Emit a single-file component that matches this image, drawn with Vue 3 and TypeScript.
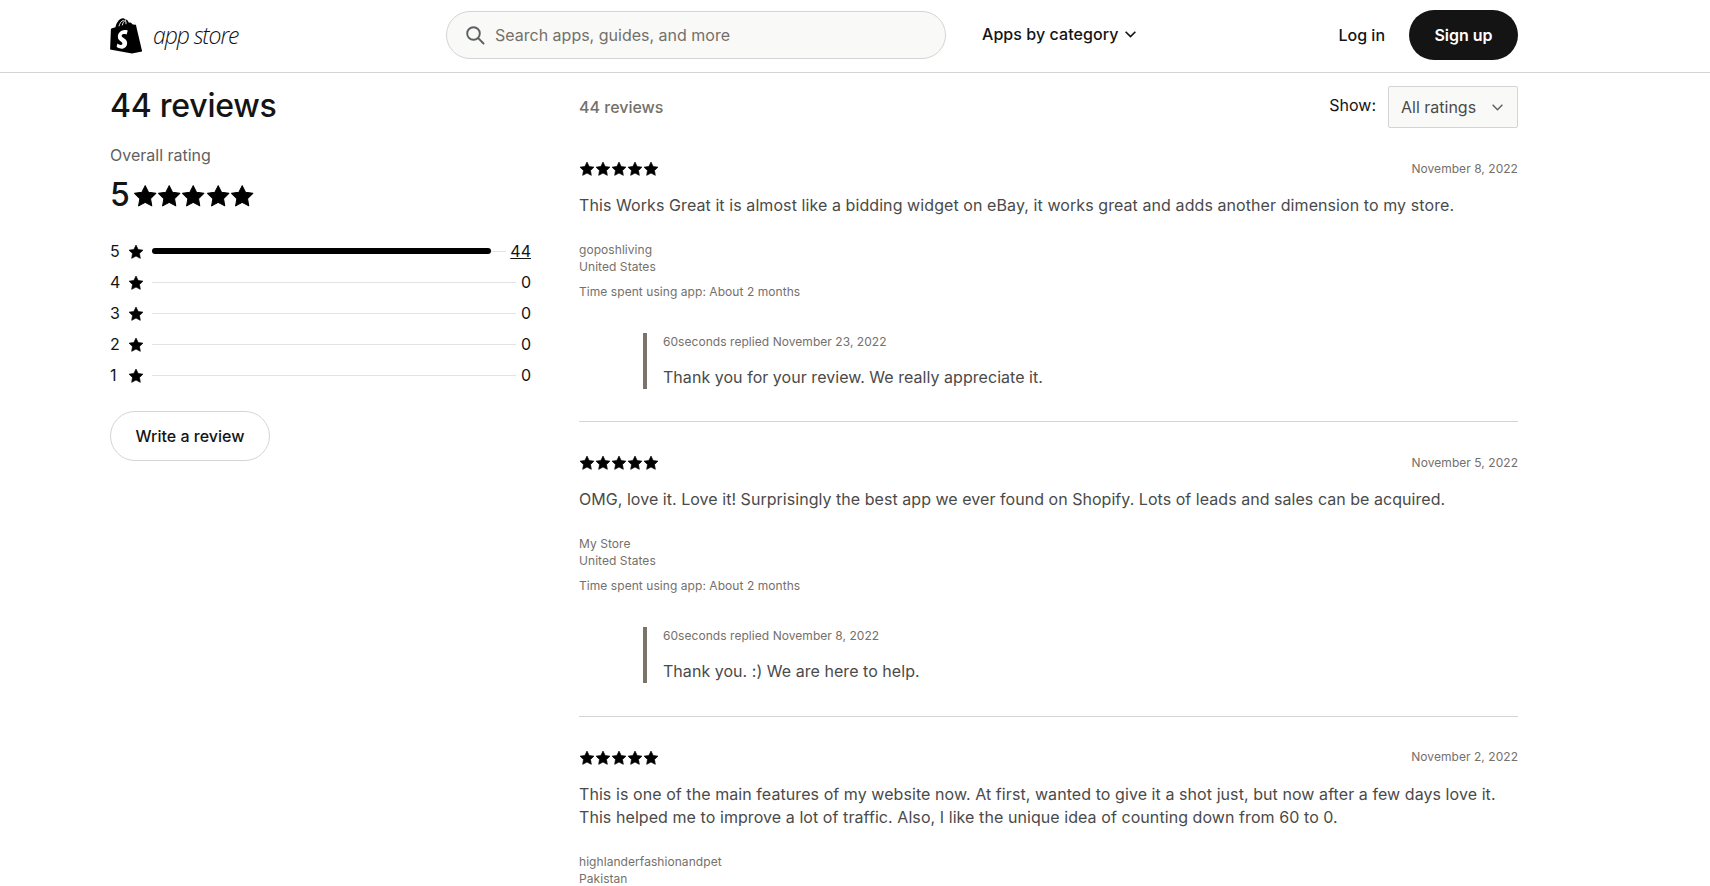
<script setup lang="ts">
interface Review {
  date: string
  text: string
  tracking: number
  author: string
  country: string
  time?: string
  replyDate?: string
  reply?: string
}

const reviews: Review[] = [
  {
    date: 'November 8, 2022',
    text: 'This Works Great it is almost like a bidding widget on eBay, it works great and adds another dimension to my store.',
    tracking: 0.08,
    author: 'goposhliving',
    country: 'United States',
    time: 'About 2 months',
    replyDate: 'November 23, 2022',
    reply: 'Thank you for your review. We really appreciate it.',
  },
  {
    date: 'November 5, 2022',
    text: 'OMG, love it. Love it! Surprisingly the best app we ever found on Shopify. Lots of leads and sales can be acquired.',
    tracking: 0.04,
    author: 'My Store',
    country: 'United States',
    time: 'About 2 months',
    replyDate: 'November 8, 2022',
    reply: 'Thank you. :) We are here to help.',
  },
  {
    date: 'November 2, 2022',
    text: 'This is one of the main features of my website now. At first, wanted to give it a shot just, but now after a few days love it. This helped me to improve a lot of traffic. Also, I like the unique idea of counting down from 60 to 0.',
    tracking: 0.07,
    author: 'highlanderfashionandpet',
    country: 'Pakistan',
  },
]

const ratings = [
  { stars: 5, count: 44 },
  { stars: 4, count: 0 },
  { stars: 3, count: 0 },
  { stars: 2, count: 0 },
  { stars: 1, count: 0 },
]

const starPath = 'M12 1.6L15.23 8.15 22.46 9.2 17.23 14.3 18.47 21.5 12 18.1 5.53 21.5 6.77 14.3 1.54 9.2 8.77 8.15z'
</script>

<template>
  <div class="page">
    <header class="topbar">
      <div class="topbar-inner">
        <a class="logo">
          <svg class="bag" viewBox="0 0 32 36" aria-hidden="true">
            <path fill="#000" d="M25.6 7.1c0-.2-.2-.3-.3-.3l-2.9-.2-2.1-2.1c-.2-.2-.6-.1-.8-.1l-1 .3C17.9 3.3 17 1.4 14.9 1.4h-.2C14.1.6 13.4.3 12.8.3 8 .3 5.7 6.3 5 9.3l-3.3 1c-1 .3-1 .4-1.2 1.3L-.3 31.5 21.5 35.6l10.3-2.2S25.6 7.3 25.6 7.1z" transform="translate(.4 0)"/>
            <path fill="#fff" d="M17.7 12.7l-1.1 3.9s-1.2-.6-2.7-.5c-2.1.1-2.2 1.4-2.2 1.8.1 1.9 5.1 2.3 5.4 6.7.2 3.5-1.9 5.9-4.9 6.1-3.6.2-5.6-1.900-5.6-1.900l.8-3.200s2 1.500 3.600 1.400c1 0 1.400-.9 1.400-1.500-.2-2.500-4.300-2.300-4.500-6.300-.2-3.400 2-6.800 6.900-7.100 1.800-.2 2.900.6 2.900.6z"/>
            <path fill="none" stroke="#fff" stroke-width=".9" d="M9 8.300c.6-2.600 2.300-5.800 4.800-6M12.300 7.400c.4-2 1.400-4.200 3-5M16 6.200c.1-1.500-.1-3-.7-4"/>
          </svg>
          <span class="logo-text">app store</span>
        </a>

        <label class="search">
          <svg class="search-icon" viewBox="0 0 20 20" aria-hidden="true">
            <circle cx="8.500" cy="8.500" r="6.300" fill="none" stroke="#5c5f62" stroke-width="1.900"/>
            <path d="M13.200 13.200l5.300 5.300" stroke="#5c5f62" stroke-width="1.900" stroke-linecap="round"/>
          </svg>
          <span class="search-placeholder">Search apps, guides, and more</span>
        </label>

        <a class="category">
          Apps by category
          <svg class="chev" viewBox="0 0 12 8" aria-hidden="true">
            <path d="M1.500 1.500L6 6l4.500-4.500" fill="none" stroke="#111" stroke-width="1.500"/>
          </svg>
        </a>

        <div class="auth">
          <a class="login">Log in</a>
          <a class="signup">Sign up</a>
        </div>
      </div>
    </header>

    <main class="content">
      <aside class="summary">
        <h2 class="summary-title">44 reviews</h2>
        <div class="overall-label">Overall rating</div>
        <div class="overall">
          <span class="overall-num">5</span>
          <span class="stars stars-lg">
            <svg v-for="n in 5" :key="n" viewBox="0 0 24 24" aria-hidden="true"><path :d="starPath"/></svg>
          </span>
        </div>

        <ul class="bars">
          <li v-for="r in ratings" :key="r.stars" class="bar-row">
            <span class="bar-num">{{ r.stars }}</span>
            <svg class="bar-star" viewBox="0 0 24 24" aria-hidden="true"><path :d="starPath"/></svg>
            <span class="bar-track">
              <span v-if="r.count" class="bar-fill" :style="{ width: '95.800%' }"></span>
            </span>
            <a class="bar-count" :class="{ linked: r.count > 0 }">{{ r.count }}</a>
          </li>
        </ul>

        <a class="write">Write a review</a>
      </aside>

      <section class="list">
        <div class="list-head">
          <span class="list-count">44 reviews</span>
          <div class="show">
            <span class="show-label">Show:</span>
            <div class="select">
              <span>All ratings</span>
              <svg viewBox="0 0 12 8" aria-hidden="true">
                <path d="M1.500 1.500L6 6l4.500-4.500" fill="none" stroke="#5c5f62" stroke-width="1.300"/>
              </svg>
            </div>
          </div>
        </div>

        <article v-for="rev in reviews" :key="rev.author" class="review">
          <div class="review-top">
            <span class="stars stars-sm">
              <svg v-for="n in 5" :key="n" viewBox="0 0 24 24" aria-hidden="true"><path :d="starPath"/></svg>
            </span>
            <span class="review-date">{{ rev.date }}</span>
          </div>
          <p class="review-text" :style="{ letterSpacing: rev.tracking + 'px' }">{{ rev.text }}</p>
          <div class="review-author">{{ rev.author }}</div>
          <div class="review-country">{{ rev.country }}</div>
          <div v-if="rev.time" class="review-time">Time spent using app: {{ rev.time }}</div>
          <div v-if="rev.reply" class="reply">
            <div class="reply-head">60seconds replied {{ rev.replyDate }}</div>
            <div class="reply-text">{{ rev.reply }}</div>
          </div>
        </article>
      </section>
    </main>
  </div>
</template>

<style>
html, body {
  margin: 0;
  background: #fff;
  overflow: hidden;
}
</style>

<style scoped>
.page {
  height: 886px;
  overflow: hidden;
  font-family: Inter, "Liberation Sans", sans-serif;
  color: #141414;
}

a { color: inherit; text-decoration: none; }

.topbar {
  height: 72px;
  border-bottom: 1px solid #d4d4d4;
}

.topbar-inner {
  width: 1408px;
  height: 72px;
  margin-left: 110px;
  display: flex;
  align-items: center;
}

.logo {
  width: 336px;
  display: flex;
  align-items: center;
  gap: 11px;
}

.bag { width: 32px; height: 36px; }

.logo-text {
  font-family: "Open Sans", sans-serif;
  font-style: italic;
  font-weight: 300;
  font-size: 23px;
  letter-spacing: -1.100px;
  color: #111;
  margin-top: -3px;
}

.search {
  width: 500px;
  height: 48px;
  box-sizing: border-box;
  border: 1px solid #d4d4d4;
  border-radius: 24px;
  background: #f9f9f7;
  display: flex;
  align-items: center;
  padding-left: 18px;
  gap: 10px;
  margin-top: -2px;
}

.search-icon { width: 20px; height: 20px; }

.search-placeholder {
  font-size: 16px;
  color: #74706b;
}

.category {
  margin-left: 36px;
  display: flex;
  align-items: center;
  gap: 6px;
  font-size: 16px;
  font-weight: 500;
  letter-spacing: .06px;
  margin-top: -4px;
}

.chev { width: 13px; height: 9px; }

.auth {
  margin-left: auto;
  display: flex;
  align-items: center;
  gap: 24px;
  margin-top: -2px;
}

.login { font-size: 16px; font-weight: 500; }

.signup {
  height: 50px;
  width: 109px;
  border-radius: 25px;
  background: #141414;
  color: #fff;
  font-size: 16px;
  font-weight: 600;
  display: flex;
  align-items: center;
  justify-content: center;
}

.content {
  width: 1408px;
  margin-left: 110px;
  display: flex;
  gap: 48px;
}

.summary { width: 421px; flex: none; }

.summary-title {
  margin: 13px 0 0;
  font-size: 32px;
  line-height: 40px;
  font-weight: 550;
  letter-spacing: -.25px;
}

.overall-label {
  margin-top: 17px;
  font-size: 16px;
  line-height: 24px;
  color: #616161;
}

.overall {
  margin-top: 8px;
  display: flex;
  align-items: center;
  gap: 3px;
}

.overall-num { font-size: 32px; line-height: 40px; font-weight: 450; letter-spacing: -.2px; }

.stars { display: inline-flex; }
.stars svg { display: block; fill: #000; stroke: #000; stroke-width: 1; stroke-linejoin: round; }
.stars-lg { margin-top: 2px; }
.stars-lg svg { width: 24.400px; height: 24.400px; }
.stars-sm svg { width: 16px; height: 16px; }

.bars {
  list-style: none;
  margin: 20px 0 0;
  padding: 0;
}

.bar-row {
  display: flex;
  align-items: center;
  height: 31.200px;
  font-size: 16px;
}

.bar-num { width: 18px; }

.bar-star { width: 16px; height: 16px; fill: #000; stroke: #000; stroke-width: 1; stroke-linejoin: round; margin-top: 2px; }

.bar-track {
  flex: 1;
  margin-left: 8px;
  margin-top: 1px;
  height: 1px;
  background: #e3e3e3;
  position: relative;
  display: block;
}

.bar-fill {
  position: absolute;
  left: 0;
  top: -3px;
  height: 6px;
  border-radius: 3px;
  background: #000;
}

.bar-count {
  margin-left: 5px;
  min-width: 10px;
  text-align: right;
}

.bar-count.linked { margin-left: 4px; text-decoration: underline; min-width: 21px; }

.write {
  margin-top: 20px;
  width: 160px;
  height: 50px;
  box-sizing: border-box;
  border: 1px solid #d4d4d4;
  border-radius: 25px;
  font-size: 16px;
  font-weight: 500;
  display: flex;
  align-items: center;
  justify-content: center;
}

.list { flex: 1; min-width: 0; }

.list-head {
  display: flex;
  justify-content: space-between;
  align-items: center;
  padding-top: 13px;
}

.list-count {
  font-size: 16px;
  font-weight: 500;
  color: #74706b;
}

.show {
  display: flex;
  align-items: center;
  gap: 12px;
}

.show-label { font-size: 16px; margin-top: -5px; }

.select {
  width: 130px;
  height: 42px;
  box-sizing: border-box;
  border: 1px solid #d4d4d4;
  border-radius: 2px;
  background: #f9f9f7;
  display: flex;
  align-items: center;
  justify-content: space-between;
  padding: 0 13px 0 12px;
  font-size: 16px;
  color: #4a4a4a;
}

.select svg { width: 13px; height: 9px; }

.review {
  padding: 33px 0 32.400px;
  border-bottom: 1px solid #d4d4d4;
}

.review:last-child { border-bottom: none; }

.review-top {
  display: flex;
  justify-content: space-between;
  align-items: center;
  height: 16px;
}

.review-date {
  font-size: 12px;
  letter-spacing: .05px;
  color: #74706b;
  margin-top: -2px;
}

.review-text {
  margin: 17px 0 0;
  font-size: 16px;
  line-height: 23px;
  color: #4a4a4a;
}

.review-author {
  margin-top: 24px;
  font-size: 12px;
  line-height: 17px;
  letter-spacing: .06px;
  color: #74706b;
}

.review-country {
  font-size: 12px;
  line-height: 17px;
  letter-spacing: .06px;
  color: #74706b;
}

.review-time {
  margin-top: 8px;
  font-size: 12px;
  line-height: 17px;
  letter-spacing: .06px;
  color: #74706b;
}

.reply {
  margin: 33px 0 0 64px;
  border-left: 4px solid #7a746d;
  padding-left: 16px;
  height: 56px;
}

.reply-head {
  font-size: 12px;
  line-height: 17px;
  letter-spacing: .05px;
  color: #74706b;
}

.reply-text {
  margin-top: 16px;
  font-size: 16px;
  line-height: 22px;
  letter-spacing: .04px;
  color: #4a4a4a;
}
</style>
